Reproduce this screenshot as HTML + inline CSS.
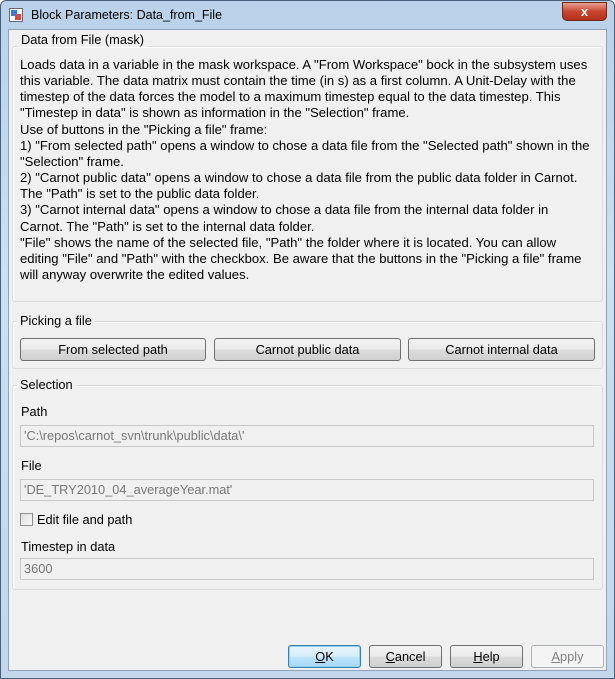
<!DOCTYPE html>
<html><head><style>
*{margin:0;padding:0;box-sizing:border-box}
body{width:615px;height:679px;overflow:hidden;font-family:"Liberation Sans",sans-serif;font-size:12.8px;color:#000;background:#fff}
.win{position:absolute;left:0;top:0;width:615px;height:679px;background:linear-gradient(#b9d1ea,#cddff2 40%,#c3d6ec);border:1px solid #4a5f7a;border-radius:6px 6px 0 0}
.title{position:absolute;left:30px;top:7px;font-size:12.5px;color:#000}
.icon{position:absolute;left:8px;top:7px;width:14px;height:14px;border:1px solid #667;background:#fff}
.close{position:absolute;left:561px;top:1px;width:45px;height:19px;border-radius:0 0 5px 5px;background:linear-gradient(#e8a090,#c8452e 50%,#b52d18);border:1px solid #6b2a20;color:#fff;font-weight:bold;text-align:center;font-size:13px;line-height:17px}
.client{position:absolute;left:8px;top:29px;width:599px;height:642px;background:#f0f0f0;border:1px solid #8ea2bb}
.abs{position:absolute}
.grp{position:absolute;border:1px solid #dcdcdc;border-radius:3px;box-shadow:inset 1px 1px 0 #fff}
.lbl{position:absolute;background:#f0f0f0;padding:0 3px}
.btn{position:absolute;height:23px;border:1px solid #707070;border-radius:3px;background:linear-gradient(#f2f2f2,#ebebeb 50%,#dddddd 51%,#cfcfcf);text-align:center;line-height:21px}
.inp{position:absolute;height:22px;border:1px solid #c8c8c8;background:#f0f0f0;color:#777;padding-left:3px;line-height:20px}
.txt{position:absolute;left:20px;top:57px;width:590px;line-height:16.15px;font-size:13.1px;white-space:nowrap}
</style></head><body>
<div class="win">
<div class="icon"><div style="position:absolute;left:1px;top:1px;width:6px;height:6px;background:#3a7bd5"></div><div style="position:absolute;right:1px;bottom:1px;width:6px;height:6px;background:#d44"></div></div>
<div class="title">Block Parameters: Data_from_File</div>
<div class="close">x</div>
</div>
<div class="client"></div>
<div class="grp" style="left:12px;top:46px;width:591px;height:256px"></div>
<div class="lbl" style="left:18px;top:32px">Data from File (mask)</div>
<div class="txt">Loads data in a variable in the mask workspace. A "From Workspace" bock in the subsystem uses<br>this variable. The data matrix must contain the time (in s) as a first column. A Unit-Delay with the<br>timestep of the data forces the model to a maximum timestep equal to the data timestep. This<br>"Timestep in data" is shown as information in the "Selection" frame.<br>Use of buttons in the "Picking a file" frame:<br>1) "From selected path" opens a window to chose a data file from the "Selected path" shown in the<br>"Selection" frame.<br>2) "Carnot public data" opens a window to chose a data file from the public data folder in Carnot.<br>The "Path" is set to the public data folder.<br>3) "Carnot internal data" opens a window to chose a data file from the internal data folder in<br>Carnot. The "Path" is set to the internal data folder.<br>"File" shows the name of the selected file, "Path" the folder where it is located. You can allow<br>editing "File" and "Path" with the checkbox. Be aware that the buttons in the "Picking a file" frame<br>will anyway overwrite the edited values.</div>
<div class="grp" style="left:12px;top:321px;width:591px;height:48px"></div>
<div class="lbl" style="left:17px;top:313px">Picking a file</div>
<div class="btn" style="left:20px;top:338px;width:186px">From selected path</div>
<div class="btn" style="left:214px;top:338px;width:187px">Carnot public data</div>
<div class="btn" style="left:408px;top:338px;width:187px">Carnot internal data</div>
<div class="grp" style="left:12px;top:385px;width:591px;height:205px"></div>
<div class="lbl" style="left:17px;top:377px">Selection</div>
<div class="abs" style="left:21px;top:404px">Path</div>
<div class="inp" style="left:20px;top:425px;width:574px">'C:\repos\carnot_svn\trunk\public\data\'</div>
<div class="abs" style="left:21px;top:458px">File</div>
<div class="inp" style="left:20px;top:479px;width:574px">'DE_TRY2010_04_averageYear.mat'</div>
<div class="abs" style="left:20px;top:513px;width:13px;height:13px;border:1px solid #8f8f8f;background:linear-gradient(135deg,#ddd,#fafafa)"></div>
<div class="abs" style="left:37px;top:512px">Edit file and path</div>
<div class="abs" style="left:21px;top:539px">Timestep in data</div>
<div class="inp" style="left:20px;top:558px;width:574px">3600</div>
<div class="btn" style="left:288px;top:645px;width:73px;border-color:#3c7fb1;background:linear-gradient(#e5f4fc,#d9eefa 50%,#bee6fd 51%,#a7d9f5);box-shadow:inset 0 0 0 1px #8fd0f3"><u>O</u>K</div>
<div class="btn" style="left:369px;top:645px;width:73px"><u>C</u>ancel</div>
<div class="btn" style="left:450px;top:645px;width:73px"><u>H</u>elp</div>
<div class="btn" style="left:531px;top:645px;width:73px;border-color:#adb2b5;background:#f4f4f4;color:#838383"><u>A</u>pply</div>
</body></html>
